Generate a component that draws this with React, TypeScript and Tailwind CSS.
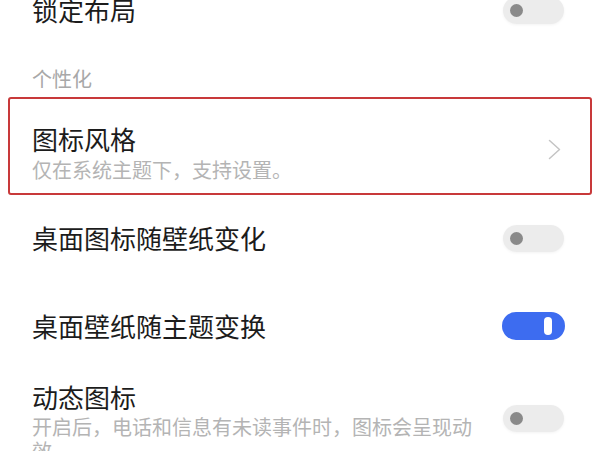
import React from 'react';

const font = { fontFamily: '"Noto Sans CJK SC", "Noto Sans", sans-serif' };

function Toggle({ on }: { on: boolean }) {
  if (on) {
    return (
      <div className="flex h-[28px] w-[63px] shrink-0 items-center justify-end rounded-full bg-[#3d6cf0] pr-[13px]">
        <div className="h-[18px] w-[8px] rounded-full bg-white" />
      </div>
    );
  }
  return (
    <div className="flex h-[27px] w-[61px] shrink-0 items-center rounded-full bg-[#ececec] pl-[7px] shadow-[0_1px_3px_rgba(0,0,0,0.05)]">
      <div className="h-[13px] w-[13px] rounded-full bg-[#8a8a8a]" />
    </div>
  );
}

function Chevron() {
  return (
    <svg width="13" height="21" viewBox="0 0 13 21" fill="none" className="mt-[6px] shrink-0">
      <polyline points="1.5,1.5 11.5,10.5 1.5,19.5" stroke="#c4c4c4" strokeWidth="1.5" strokeLinecap="round" strokeLinejoin="round" />
    </svg>
  );
}

export default function App() {
  return (
    <div className="h-[451px] w-[600px] overflow-hidden bg-white" style={font}>
      {/* 锁定布局 */}
      <div className="-mt-[34px] flex h-[88px] items-center justify-between pl-[32px] pr-[36px]">
        <span className="text-[26px] leading-[32px] text-[#1c1c1c]">锁定布局</span>
        <Toggle on={false} />
      </div>

      {/* 个性化 */}
      <div className="h-[43px] pl-[32px] pt-[11px]">
        <span className="text-[20px] leading-[28px] text-[#a8a8a8]">个性化</span>
      </div>

      {/* 图标风格 */}
      <div className="mx-[8px] flex h-[98px] items-center justify-between rounded-[3px] border-2 border-[#c8393a] pl-[22px] pr-[29px]">
        <div className="flex flex-col gap-[2px] pt-[13px]">
          <span className="text-[26px] leading-[31px] text-[#1c1c1c]">图标风格</span>
          <span className="text-[20px] leading-[27px] text-[#b4b4b4]">仅在系统主题下，支持设置。</span>
        </div>
        <Chevron />
      </div>

      {/* 桌面图标随壁纸变化 */}
      <div className="flex h-[86px] items-center justify-between pl-[32px] pr-[36px]">
        <span className="text-[26px] leading-[32px] text-[#1c1c1c]">桌面图标随壁纸变化</span>
        <Toggle on={false} />
      </div>

      {/* 桌面壁纸随主题变换 */}
      <div className="flex h-[90px] items-center justify-between pl-[32px] pr-[35px]">
        <span className="text-[26px] leading-[32px] text-[#1c1c1c]">桌面壁纸随主题变换</span>
        <Toggle on={true} />
      </div>

      {/* 动态图标 */}
      <div className="flex items-start justify-between pl-[32px] pr-[36px] pt-[10px]">
        <div className="flex w-[450px] flex-col">
          <span className="text-[26px] leading-[32px] text-[#1c1c1c]">动态图标</span>
          <span className="mt-[2px] text-[20px] leading-[24px] text-[#b4b4b4]">
            开启后，电话和信息有未读事件时，图标会呈现动效
          </span>
        </div>
        <div className="pt-[24px]">
          <Toggle on={false} />
        </div>
      </div>
    </div>
  );
}
